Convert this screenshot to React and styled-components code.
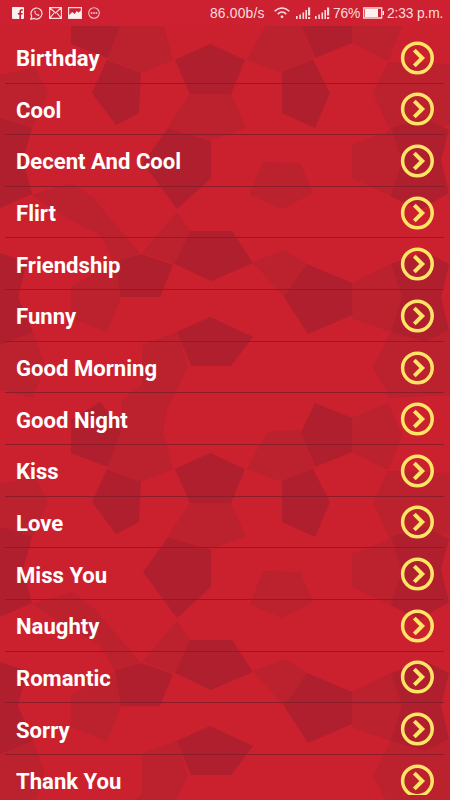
import React from "react";
import styled, { createGlobalStyle } from "styled-components";

const GlobalStyle = createGlobalStyle`
  * { box-sizing: border-box; }
  body { margin: 0; background: #cb202e; }
`;

const Screen = styled.main`
  position: relative;
  width: 450px;
  height: 800px;
  overflow: hidden;
  background: #cb202e;
  color: #fff;
`;

const Backdrop = styled.svg`
  position: absolute;
  inset: 0;
  display: block;
`;

const StatusBar = styled.header`
  position: relative;
  display: flex;
  align-items: center;
  height: 26px;
  padding: 0 7px 0 12px;
  background: #cd2030;
  color: #fbdcde;
  font: 13.8px/26px "Liberation Sans", Arial, sans-serif;
`;

const Notifications = styled.div`
  display: flex;
  align-items: center;
  gap: 6px;
  margin-right: auto;
`;

const Glyph = styled.svg`
  display: block;
  flex: none;
  margin-left: ${(p) => p.$before || 0}px;
`;

const StatusText = styled.span`
  display: block;
  width: ${(p) => p.$width}px;
  margin-left: ${(p) => p.$before || 0}px;
  padding-top: 1px;
  letter-spacing: ${(p) => p.$spacing || 0}px;
  white-space: nowrap;
`;

const List = styled.ul`
  position: relative;
  height: 768.5px;
  margin: 0;
  padding: 5.9px 6px 0 5px;
  overflow: hidden;
  list-style: none;
`;

const Row = styled.li`
  display: flex;
  align-items: center;
  justify-content: space-between;
  height: 51.65px;
  padding: 1px 10px 0 11px;
  border-bottom: 1px solid #8c1c29;
`;

const Label = styled.span`
  padding-top: 1px;
  font: 700 22.1px/26px Roboto, sans-serif;
  white-space: nowrap;
`;

const categories = [
  "Birthday", "Cool", "Decent And Cool", "Flirt", "Friendship", "Funny",
  "Good Morning", "Good Night", "Kiss", "Love", "Miss You", "Naughty",
  "Romantic", "Sorry", "Thank You",
];

const MID = "#bc212e";
const DARK = "#b01f2e";
const TILE = 409;

const shapes = [
  [MID, "120,428 122,400 142,385 142,345 177,332 188,366 167,410 163,432 173,469 141,482 108,468"],
  [DARK, "71,420 100,402 122,428 108,467 71,453"],
  [DARK, "210,44 175,60 190,94 231,94 245,60"],
  [DARK, "107,60 141,73 139,113 116,125 92,93"],
  [DARK, "282,72 313,60 330,93 315,128 282,113"],
  [MID, "267,432 301,430 314,469 282,482 247,469"],
  [DARK, "315,403 352,418 352,452 315,467 301,432"],
  [MID, "352,418 388,403 402,435 388,470 352,452"],
  [MID, "388,62 450,64 450,125 390,130 373,93"],
  [DARK, "391,128 425,118 449,130 441,160 449,193 420,210 390,196 402,162"],
  [MID, "352,145 391,130 402,162 391,196 352,178"],
  [MID, "263,162 300,163 313,193 282,209 250,195"],
  [MID, "190,94 231,94 246,128 210,140 168,127"],
  [DARK, "168,128 211,141 211,178 177,209 143,163"],
  [MID, "0,75 35,67 48,93 32,128 0,118"],
  [DARK, "0,118 32,128 23,160 32,194 0,208"],
  [MID, "32,195 72,183 93,198 140,253 115,263 100,235 72,221"],
  [MID, "177,212 190,231 175,264 142,253"],
  [DARK, "190,231 232,231 253,263 211,281 175,264"],
  [DARK, "141,254 173,265 160,297 121,297 115,262"],
  [MID, "71,286 115,263 121,297 107,332 71,318"],
  [DARK, "0,253 27,262 18,297 33,332 0,345"],
  [MID, "0,345 33,332 45,365 33,398 0,390"],
  [DARK, "210,317 253,337 231,366 191,366 177,332"],
  [MID, "253,262 285,250 307,264 284,297"],
  [DARK, "307,264 352,283 352,315 308,334 284,297"],
  [MID, "352,283 391,264 402,297 391,332 352,318"],
  [DARK, "391,264 425,252 449,264 441,297 449,330 425,342 391,332 402,297"],
  [MID, "391,332 425,342 450,330 450,395 390,398 373,367"],
];

function Pattern() {
  return (
    <Backdrop width="450" height="800" aria-hidden="true">
      {[-TILE, 0, TILE].map((dy) => (
        <g key={dy} transform={`translate(0 ${dy})`}>
          {shapes.map(([fill, points]) => (
            <polygon key={points} points={points} fill={fill} />
          ))}
        </g>
      ))}
    </Backdrop>
  );
}

function Arrow() {
  return (
    <Glyph width="34" height="34" viewBox="0 0 34 34" fill="none" stroke="#ffe566">
      <circle cx="17.4" cy="17" r="14.8" strokeWidth="3.5" />
      <path d="M14.3 9.2 22.2 17 14.3 24.8" strokeWidth="4" />
    </Glyph>
  );
}

function Signal({ before }) {
  return (
    <Glyph $before={before} width="15" height="12" fill="#fbdcde">
      <path d="M0 9h1.6v3H0zM3.3 7.5h1.6V12H3.3zM6.5 5.5h1.6V12H6.5zM9.4 3h1.6v9H9.4zM12 .5h2.2v8H12zM12 10h2.2v2H12z" />
    </Glyph>
  );
}

function Status() {
  return (
    <StatusBar>
      <Notifications>
        <Glyph width="12" height="12">
          <rect width="12" height="12" rx="1" fill="#fff0f0" />
          <path d="M10.8 3H9.6Q8.2 3 8.2 4.5V12M5.8 6.7h4.8" fill="none" stroke="#b71d2c" strokeWidth="1.6" />
        </Glyph>
        <Glyph width="13" height="13" viewBox="0 0 13 13" fill="none" stroke="#fbdcde">
          <path d="M1.7 9.2A5.5 5.5 0 1 1 4 11.4L.8 12.2z" strokeWidth="1.2" />
          <path d="M4.3 3.7Q4 7.8 8.9 9.1L9.5 7.9 7.9 7 7.1 7.6 5.2 5.7 5.8 4.9 5.1 3.4z" fill="#fbdcde" stroke="none" />
        </Glyph>
        <Glyph width="13" height="12" fill="none" stroke="#fbdcde" strokeWidth="1.2">
          <path d="M.6.6h11.8v10.8H.6zM1 1l5.5 5L12 1M1 11l4-5M12 11 8 6" />
        </Glyph>
        <Glyph width="14" height="12">
          <path d="M.6.6h12.8v10.8H.6z" fill="none" stroke="#fbdcde" strokeWidth="1.2" />
          <path d="M1 8.3 4.2 5l2.5 2 2-3 1.8 1.5L13 3.5V11H1z" fill="#fff0f0" />
        </Glyph>
        <Glyph width="12" height="12">
          <circle cx="6" cy="6" r="5.3" fill="none" stroke="#f8bec3" strokeWidth="1.1" />
          <path d="M2.8 5.3h1.6v1.4H2.8zM5.2 5.3h1.6v1.4H5.2zM7.6 5.3h1.6v1.4H7.6z" fill="#fbdcde" />
        </Glyph>
      </Notifications>
      <StatusText $width={56} $spacing={0.2}>86.00b/s</StatusText>
      <Glyph $before={8} width="16" height="12" fill="none" stroke="#fbdcde" strokeWidth="1.5">
        <path d="M.6 4.3Q8-2.2 15.4 4.3M3.7 7.1Q8 3 12.3 7.1" />
        <circle cx="8" cy="9.8" r="1.4" fill="#fbdcde" stroke="none" />
      </Glyph>
      <Signal before={6} />
      <Signal before={4} />
      <StatusText $before={3} $width={28} $spacing={-0.15}>76%</StatusText>
      <Glyph $before={2} width="22" height="12">
        <path d="M.7 1h18v10H.7z" fill="none" stroke="#fbdcde" strokeWidth="1.3" />
        <path d="M2 2h13v8H2zM19.5 4H21v4h-1.5z" fill="#fff0f0" />
      </Glyph>
      <StatusText $before={2} $width={56} $spacing={-0.15}>2:33 p.m.</StatusText>
    </StatusBar>
  );
}

export default function App() {
  return (
    <Screen>
      <GlobalStyle />
      <Pattern />
      <Status />
      <List>
        {categories.map((name) => (
          <Row key={name}>
            <Label>{name}</Label>
            <Arrow />
          </Row>
        ))}
      </List>
    </Screen>
  );
}
